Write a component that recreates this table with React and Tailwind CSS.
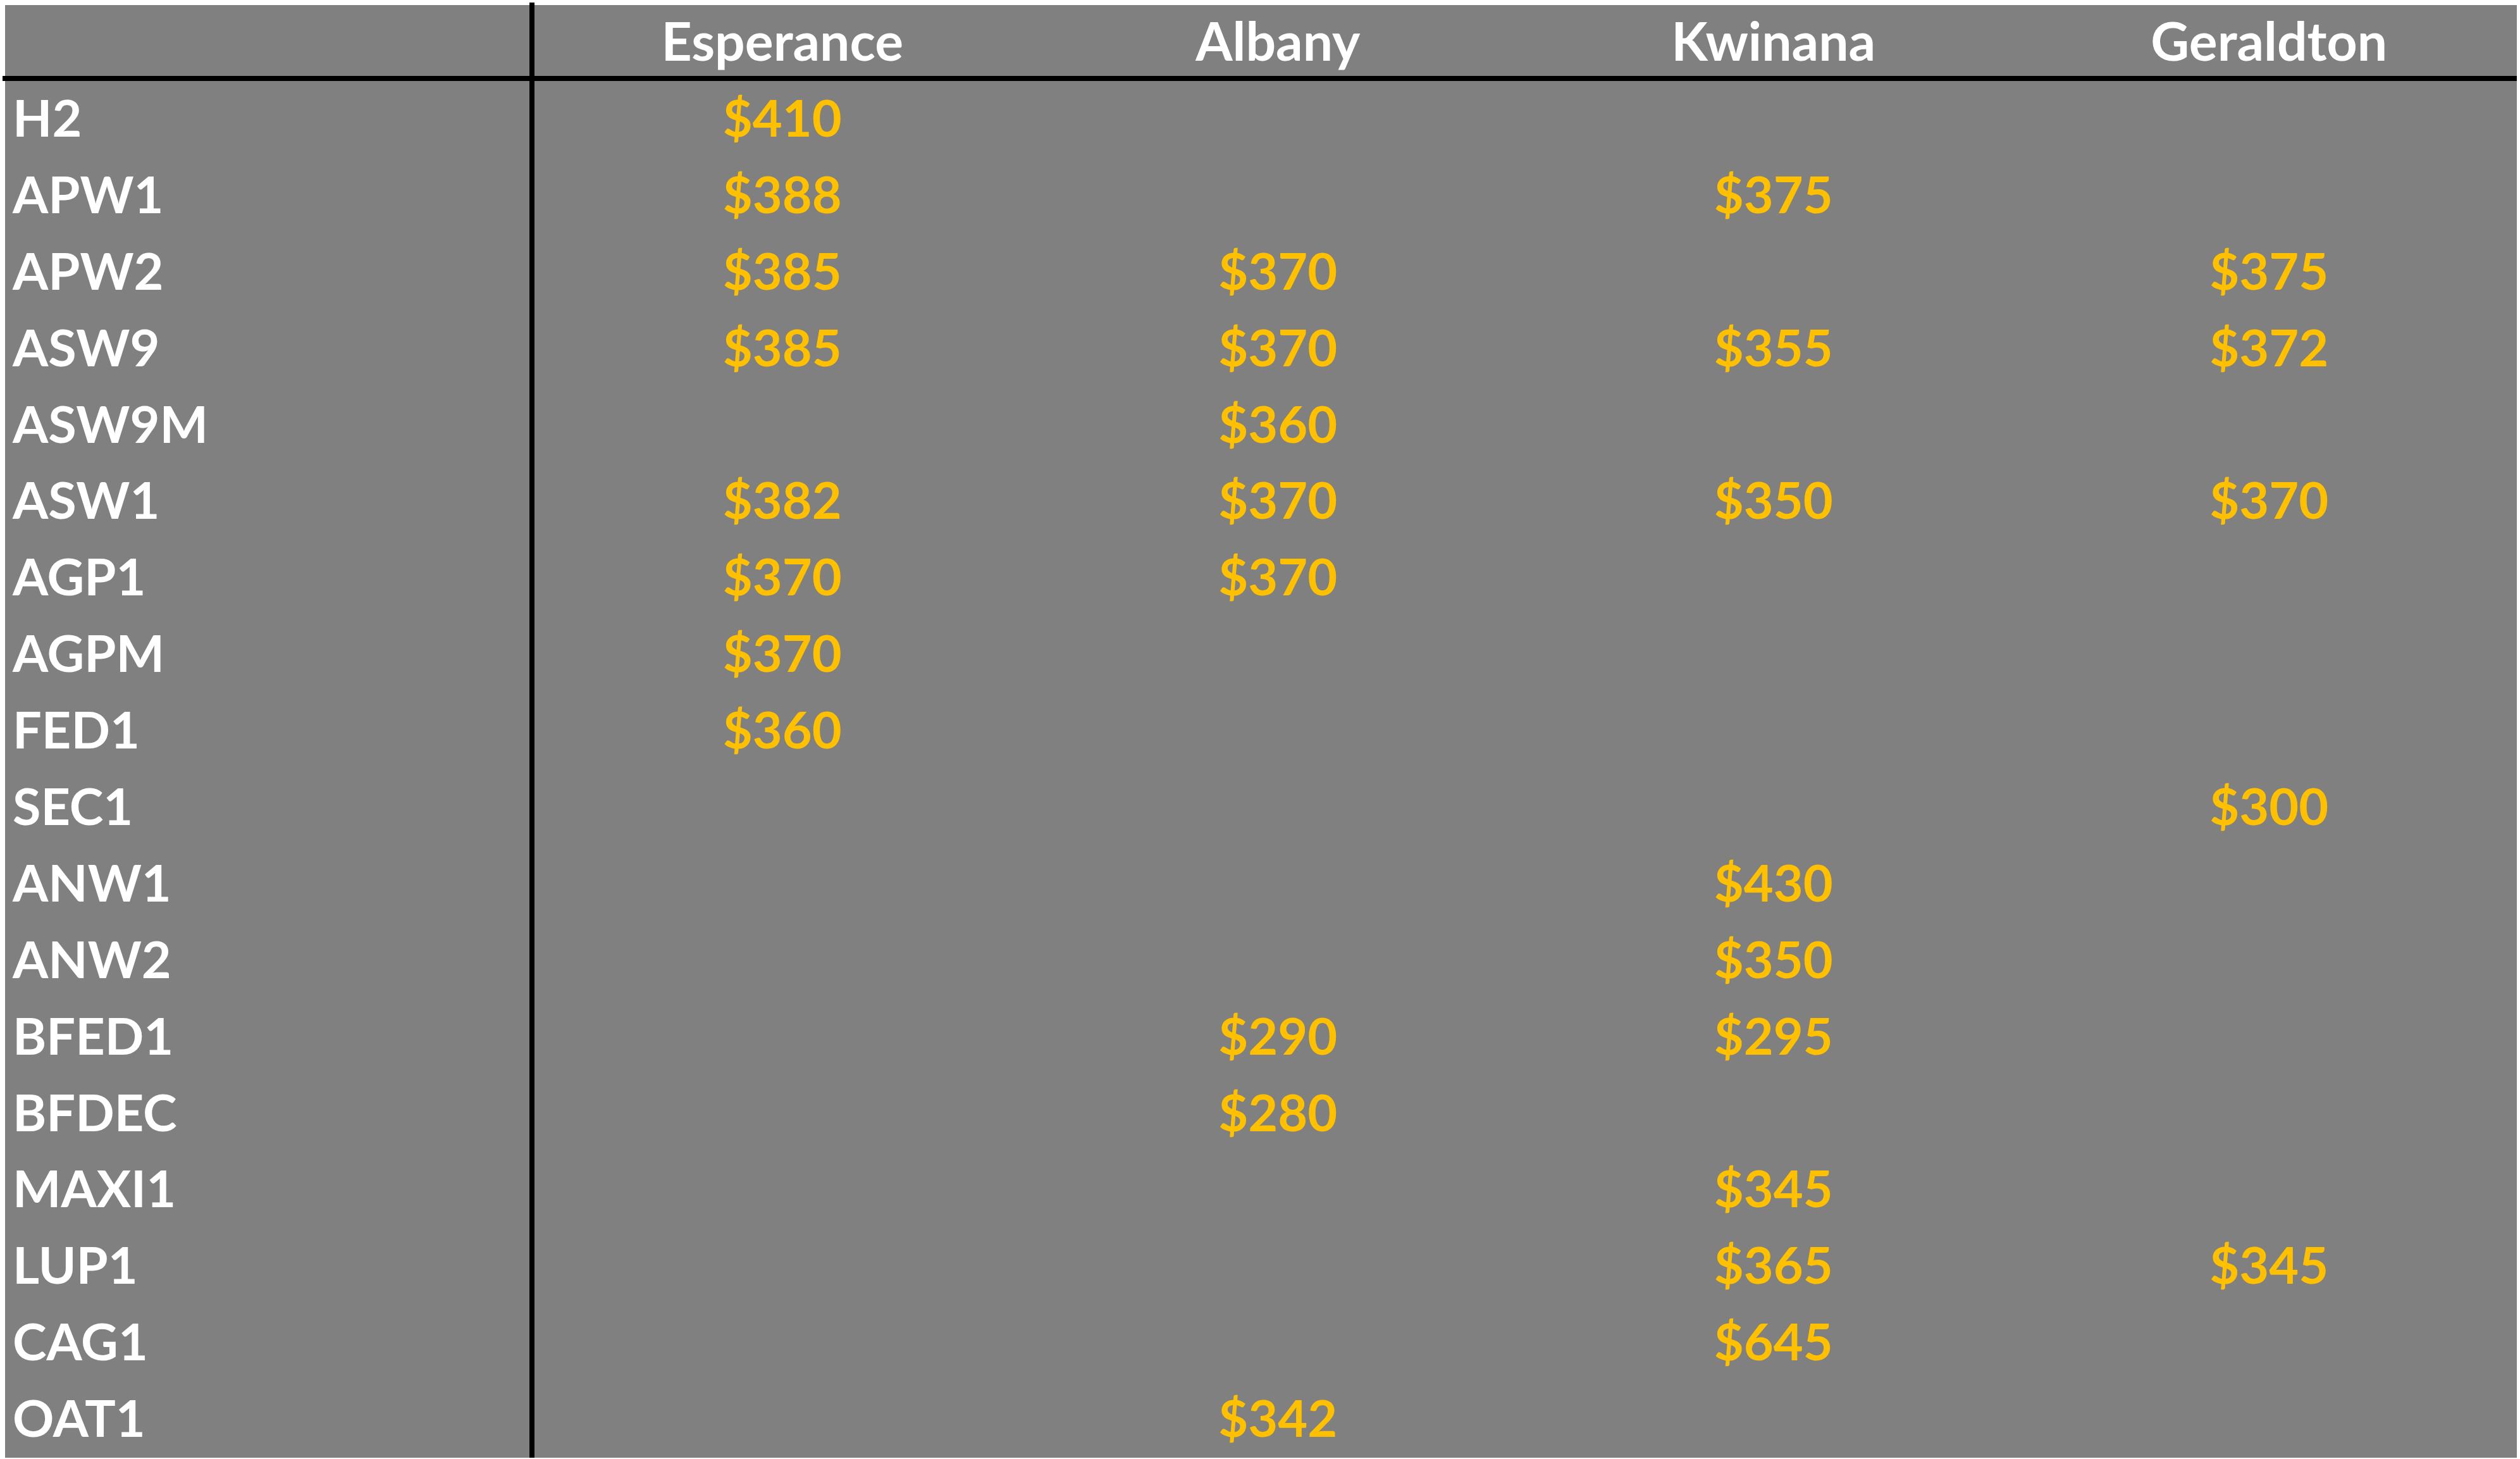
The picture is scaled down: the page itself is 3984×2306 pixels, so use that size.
import React from 'react';

const cities = ['Esperance', 'Albany', 'Kwinana', 'Geraldton'];

// prices per grade, in city order; empty string = no price listed
const rows = [
  ['H2', ['$410', '', '', '']],
  ['APW1', ['$388', '', '$375', '']],
  ['APW2', ['$385', '$370', '', '$375']],
  ['ASW9', ['$385', '$370', '$355', '$372']],
  ['ASW9M', ['', '$360', '', '']],
  ['ASW1', ['$382', '$370', '$350', '$370']],
  ['AGP1', ['$370', '$370', '', '']],
  ['AGPM', ['$370', '', '', '']],
  ['FED1', ['$360', '', '', '']],
  ['SEC1', ['', '', '', '$300']],
  ['ANW1', ['', '', '$430', '']],
  ['ANW2', ['', '', '$350', '']],
  ['BFED1', ['', '$290', '$295', '']],
  ['BFDEC', ['', '$280', '', '']],
  ['MAXI1', ['', '', '$345', '']],
  ['LUP1', ['', '', '$365', '$345']],
  ['CAG1', ['', '', '$645', '']],
  ['OAT1', ['', '$342', '', '']],
];

const font = { fontFamily: 'Lato, "Noto Sans", sans-serif' };

const App = () => {
  return (
    <div className="w-[3984px] h-[2306px] bg-white pt-[8px] pl-[8px] pr-[5px] pb-[2px]" style={font}>
      <div className="h-full bg-[#808080] flex flex-col font-bold text-[81px] leading-none">
        {/* header */}
        <div className="flex h-[112px] shrink-0">
          <div className="w-[829px] shrink-0" />
          <div className="w-[8px] shrink-0 bg-black -mt-[4px]" />
          {cities.map(city => (
            <div key={city} className="flex-1 flex items-center justify-center text-white text-[84px]">
              {city}
            </div>
          ))}
        </div>
        <div className="h-[8px] shrink-0 bg-black -ml-[4px]" />

        {/* body */}
        {rows.map(([grade, prices]) => (
          <div key={grade} className="flex flex-1">
            <div className="w-[829px] shrink-0 flex items-center pl-[12px] pb-[8px] text-white">
              {grade}
            </div>
            <div className="w-[8px] shrink-0 bg-black" />
            {prices.map((p, i) => (
              <div key={i} className="flex-1 flex items-center justify-center pb-[8px] text-[#ffc000]">
                {p}
              </div>
            ))}
          </div>
        ))}
      </div>
    </div>
  );
};

export default App;
